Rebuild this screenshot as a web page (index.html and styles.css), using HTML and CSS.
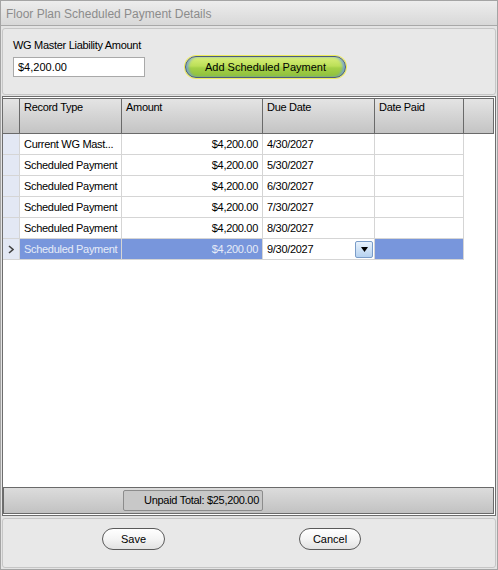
FILE: index.html
```html
<!DOCTYPE html>
<html lang="en">

<head>
  <meta charset="UTF-8" />
  <title>Floor Plan Scheduled Payment Details</title>
  <link rel="stylesheet" href="styles.css">
</head>

<body>
  <div class="window">
    <div class="titlebar">Floor Plan Scheduled Payment Details</div>

    <!-- liability amount + add button -->
    <div class="panel top-panel">
      <div class="field">
        <label class="field-label" for="amount">WG Master Liability Amount</label>
        <input class="field-input" id="amount" type="text" value="$4,200.00">
      </div>
      <button class="btn-add">Add Scheduled Payment</button>
    </div>

    <div class="grid">
      <div class="grid-row grid-head">
        <div class="cell c-sel"></div>
        <div class="cell c-type">Record Type</div>
        <div class="cell c-amount">Amount</div>
        <div class="cell c-due">Due Date</div>
        <div class="cell c-paid">Date Paid</div>
        <div class="cell c-fill"></div>
      </div>

      <div class="grid-body">
        <div class="grid-row">
          <div class="cell c-sel"></div>
          <div class="cell c-type">Current WG Mast...</div>
          <div class="cell c-amount">$4,200.00</div>
          <div class="cell c-due">4/30/2027</div>
          <div class="cell c-paid"></div>
        </div>
        <div class="grid-row">
          <div class="cell c-sel"></div>
          <div class="cell c-type">Scheduled Payment</div>
          <div class="cell c-amount">$4,200.00</div>
          <div class="cell c-due">5/30/2027</div>
          <div class="cell c-paid"></div>
        </div>
        <div class="grid-row">
          <div class="cell c-sel"></div>
          <div class="cell c-type">Scheduled Payment</div>
          <div class="cell c-amount">$4,200.00</div>
          <div class="cell c-due">6/30/2027</div>
          <div class="cell c-paid"></div>
        </div>
        <div class="grid-row">
          <div class="cell c-sel"></div>
          <div class="cell c-type">Scheduled Payment</div>
          <div class="cell c-amount">$4,200.00</div>
          <div class="cell c-due">7/30/2027</div>
          <div class="cell c-paid"></div>
        </div>
        <div class="grid-row">
          <div class="cell c-sel"></div>
          <div class="cell c-type">Scheduled Payment</div>
          <div class="cell c-amount">$4,200.00</div>
          <div class="cell c-due">8/30/2027</div>
          <div class="cell c-paid"></div>
        </div>
        <div class="grid-row selected">
          <div class="cell c-sel">
            <svg class="row-arrow" width="6" height="9" viewBox="0 0 6 9">
              <path d="M1 1 L5 4.5 L1 8" fill="none" stroke="#444" stroke-width="1.6" />
            </svg>
          </div>
          <div class="cell c-type">Scheduled Payment</div>
          <div class="cell c-amount">$4,200.00</div>
          <div class="cell c-due editing">
            <span>9/30/2027</span>
            <span class="drop-btn">
              <svg width="7" height="5" viewBox="0 0 7 5">
                <path d="M0 0 H7 L3.5 5 Z" fill="#000" />
              </svg>
            </span>
          </div>
          <div class="cell c-paid"></div>
        </div>
      </div>

      <div class="grid-foot">
        <div class="total">Unpaid Total: $25,200.00</div>
      </div>
    </div>

    <div class="panel bottom-panel">
      <button class="btn btn-save">Save</button>
      <button class="btn btn-cancel">Cancel</button>
    </div>
  </div>
</body>

</html>
```

FILE: styles.css
```css
* {
  box-sizing: border-box;
}

body {
  margin: 0;
  background-color: #fff;
  font-family: "Liberation Sans", Arial, sans-serif;
  font-size: 11px;
  letter-spacing: -0.3px;
  color: #000;
}

.window {
  display: flex;
  flex-direction: column;
  width: 498px;
  height: 570px;
  background-color: #e4e4e4;
  border: 1px solid #a4a4a4;
}

.titlebar {
  height: 25px;
  padding-left: 5px;
  line-height: 26px;
  font-size: 12px;
  letter-spacing: 0;
  color: #8c8c8c;
  background: linear-gradient(#ededed, #d8d8d8);
  border-bottom: 1px solid #a8a8a8;
}

.panel {
  margin: 2px 1px 0 1px;
  background-color: #e8e8e8;
  border: 1px solid #c6c6c6;
  border-radius: 3px;
}

.top-panel {
  display: flex;
  align-items: flex-start;
  height: 67px;
  padding: 9px 0 0 10px;
}

.field {
  display: flex;
  flex-direction: column;
  width: 132px;
}

.field-label {
  height: 19px;
  line-height: 14px;
  white-space: nowrap;
}

.field-input {
  width: 132px;
  height: 20px;
  padding: 0 4px;
  font: inherit;
  border: 1px solid #a9a9a9;
  background-color: #fff;
}

.btn-add {
  flex: 0 0 161px;
  height: 22px;
  margin: 18px 0 0 40px;
  padding: 0;
  font: inherit;
  color: #000;
  border: 1px solid #4c5c7c;
  border-radius: 11px;
  background: linear-gradient(#d9ef7a, #bcdf58 45%, #a4d046 55%, #8ebf3c);
  box-shadow: inset 3px 0 3px -1px #6d9be4, inset -3px 0 3px -1px #6d9be4, 0 0 0 1px #ecec5a;
}

/* data grid */
.grid {
  display: flex;
  flex-direction: column;
  height: 420px;
  margin: 1px 1px 0 1px;
  padding: 1px 1px 1px 0;
  background-color: #fff;
  border: 1px solid #6e6e6e;
}

.grid-row {
  display: flex;
  height: 21px;
}

.cell {
  height: 100%;
  padding: 0 4px;
  line-height: 21px;
  white-space: nowrap;
  overflow: hidden;
  border-right: 1px solid #d5d5d5;
  border-bottom: 1px solid #d5d5d5;
}

.c-sel {
  flex: 0 0 17px;
  padding: 0;
  background-color: #e3e8f4;
}

.c-type {
  flex: 0 0 102px;
}

.c-amount {
  flex: 0 0 141px;
  text-align: right;
}

.c-due {
  flex: 0 0 112px;
}

.c-paid {
  flex: 0 0 89px;
}

.c-fill {
  flex: 1;
}

.grid-head {
  height: 36px;
  border-top: 1px solid #6a6a6a;
}

.grid-head .cell {
  line-height: 17px;
  text-align: left;
  background: linear-gradient(#e4e4e4, #c4c4c4);
  border-color: #6a6a6a;
}

.grid-body {
  flex: 1;
}

.selected .cell {
  background-color: #7896dc;
  color: #e6ecf8;
}

.selected .c-sel {
  display: flex;
  align-items: center;
  padding-left: 5px;
  background-color: #e3e8f4;
}

.selected .editing {
  display: flex;
  align-items: center;
  justify-content: space-between;
  padding-right: 1px;
  background-color: #fff;
  color: #000;
}

.drop-btn {
  display: flex;
  align-items: center;
  justify-content: center;
  width: 18px;
  height: 17px;
  border: 1px solid #7a9cc8;
  border-radius: 2px;
  background: linear-gradient(#e8f2fc, #b6d2f0);
}

.grid-foot {
  height: 27px;
  padding: 2px 0 0 119px;
  background: linear-gradient(#dcdcdc, #c2c2c2);
  border: 1px solid #6a6a6a;
}

.total {
  width: 140px;
  height: 21px;
  padding-right: 3px;
  line-height: 19px;
  text-align: right;
  background-color: #c8c8c8;
  border: 1px solid #8c8c8c;
  border-radius: 2px;
}

.bottom-panel {
  display: flex;
  align-items: flex-start;
  flex: 1;
  margin-bottom: 1px;
  padding: 9px 0 0 99px;
}

.btn {
  height: 22px;
  padding: 0;
  font: inherit;
  color: #000;
  border: 1px solid #5a5a5a;
  border-radius: 11px;
  background: linear-gradient(#fff, #f4f4f4 50%, #e2e2e2);
}

.btn-save {
  width: 63px;
}

.btn-cancel {
  width: 62px;
  margin-left: 134px;
}
```
